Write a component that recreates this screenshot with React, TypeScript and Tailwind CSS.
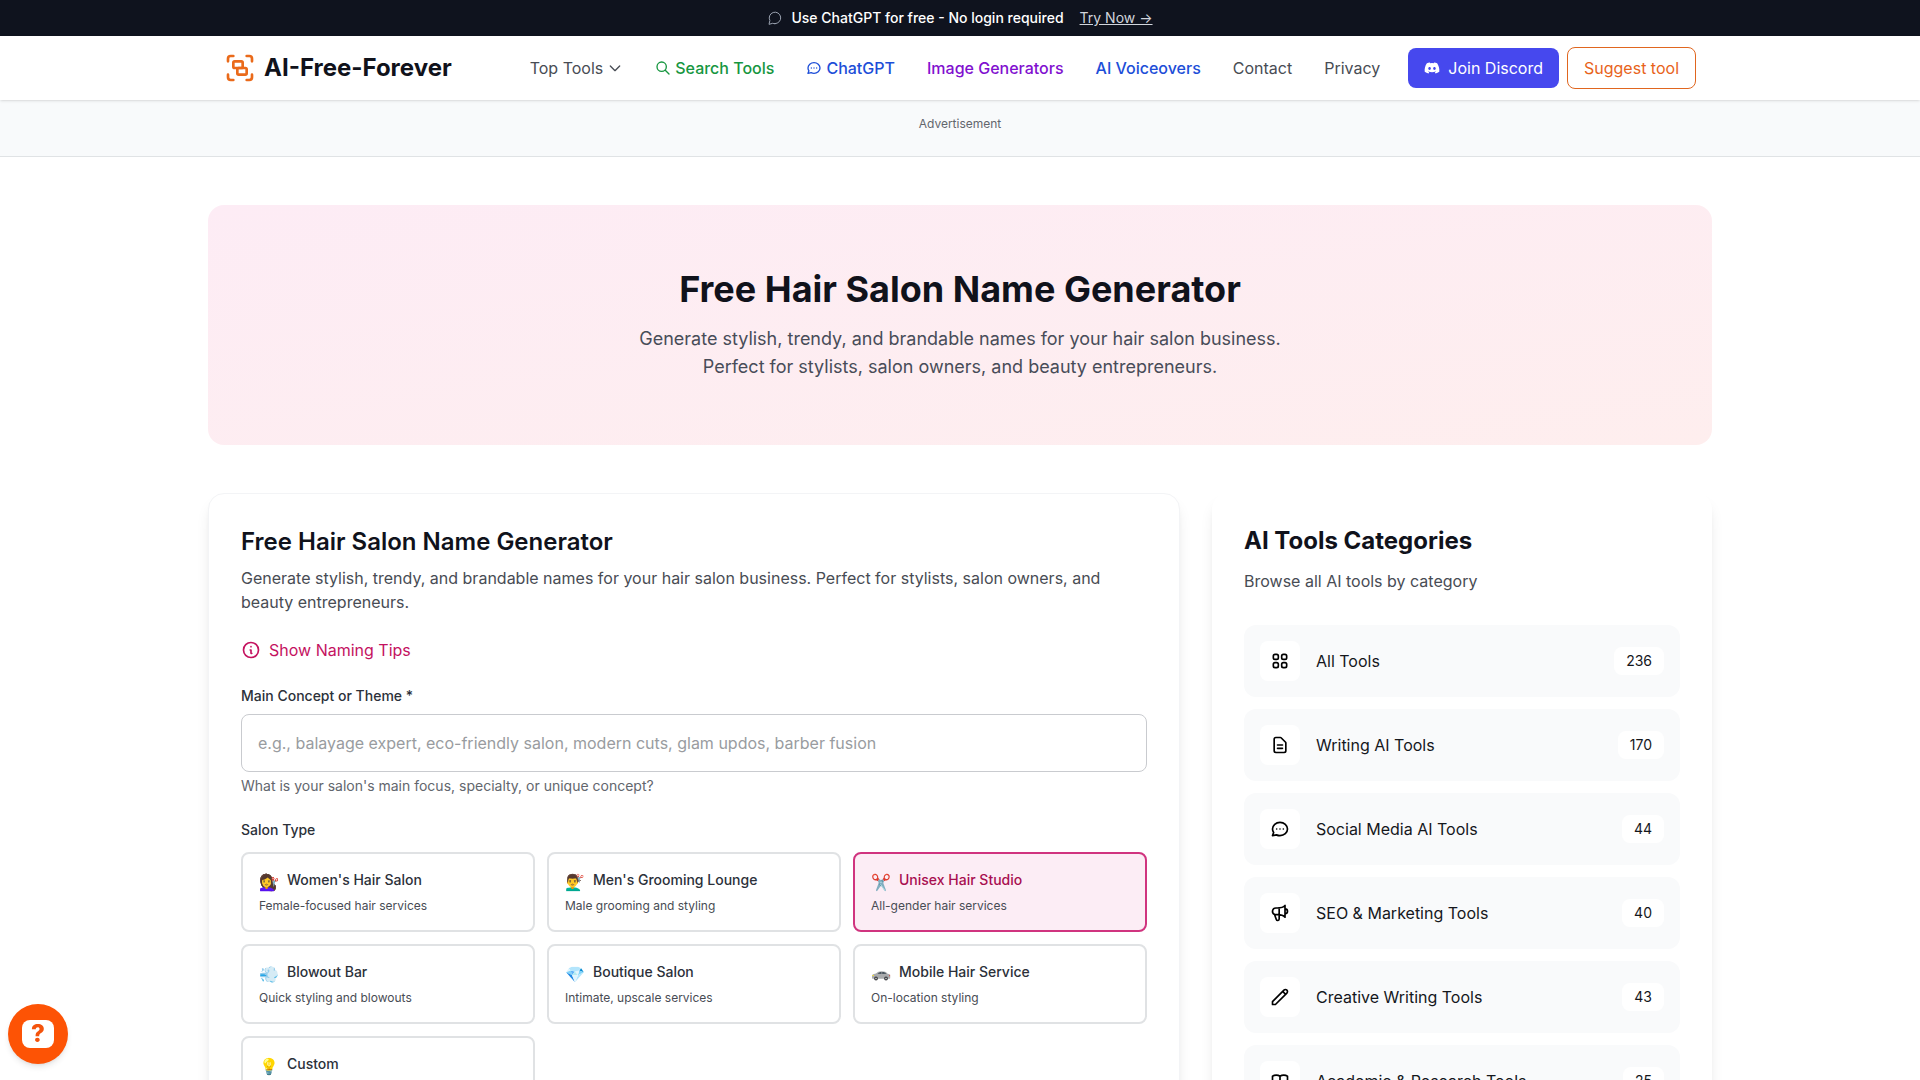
import { useState } from "react";
import {
  HiOutlineBookOpen,
  HiOutlineChat,
  HiOutlineChevronDown,
  HiOutlineDocumentText,
  HiOutlineInformationCircle,
  HiOutlinePencil,
  HiOutlineSearch,
  HiOutlineSpeakerphone,
  HiOutlineViewGrid,
} from "react-icons/hi";
import { FaDiscord } from "react-icons/fa";
import { Group } from "lucide-react";

function classNames(...classes: string[]) {
  return classes.filter(Boolean).join(" ");
}

function ChatBubble({ className }: { className?: string }) {
  return (
    <svg className={className} viewBox="0 0 24 24" fill="none" stroke="currentColor" strokeWidth={1.5} aria-hidden="true">
      <path
        strokeLinecap="round"
        strokeLinejoin="round"
        d="M12 20.5a8.6 8.6 0 1 0-7.7-4.7L3 21.5l5.6-1.6a8.6 8.6 0 0 0 3.4.6z"
      />
    </svg>
  );
}

function SilverCar() {
  return (
    <svg className="h-5 w-5" viewBox="0 0 20 20" aria-hidden="true">
      <path d="M1 14.5c0-1.6.7-2.3 4-2.9 1.6-1.6 3-2.3 5.6-2.3 3 0 4.5.7 6 2.4 1.800.4 2.600 1 2.600 2.600v1.600c0 .6-.4.9-1 .9H2c-.7 0-1-.4-1-1z" fill="#a9abad" />
      <path d="M6.500 11.800c1.200-1.200 2.200-1.700 4-1.700v1.900zM11.200 10.100c2 0 3.200.5 4.300 1.700l-4.300.2z" fill="#46525c" />
      <path d="M1.200 13.200l1.800-.5v1.300H1.200z" fill="#f2dc3a" />
      <path d="M18.200 12.800h.9v1.500h-.9z" fill="#c94a45" />
      <circle cx="5" cy="16.500" r="1.900" fill="#3d3f42" />
      <circle cx="15" cy="16.500" r="1.900" fill="#3d3f42" />
      <circle cx="5" cy="16.500" r=".8" fill="#c9cbcd" />
      <circle cx="15" cy="16.500" r=".8" fill="#c9cbcd" />
    </svg>
  );
}

const salonTypes = [
  { id: "women", icon: "💇‍♀️", name: "Women's Hair Salon", description: "Female-focused hair services" },
  { id: "men", icon: "💇‍♂️", name: "Men's Grooming Lounge", description: "Male grooming and styling" },
  { id: "unisex", icon: "✂️", name: "Unisex Hair Studio", description: "All-gender hair services" },
  { id: "blowout", icon: "💨", name: "Blowout Bar", description: "Quick styling and blowouts" },
  { id: "boutique", icon: "💎", name: "Boutique Salon", description: "Intimate, upscale services" },
  { id: "mobile", icon: <SilverCar />, name: "Mobile Hair Service", description: "On-location styling" },
  { id: "custom", icon: "💡", name: "Custom", description: "Define your own type" },
];

const categories = [
  { name: "All Tools", count: 236, icon: HiOutlineViewGrid },
  { name: "Writing AI Tools", count: 170, icon: HiOutlineDocumentText },
  { name: "Social Media AI Tools", count: 44, icon: HiOutlineChat },
  { name: "SEO & Marketing Tools", count: 40, icon: HiOutlineSpeakerphone },
  { name: "Creative Writing Tools", count: 43, icon: HiOutlinePencil },
  { name: "Academic & Research Tools", count: 25, icon: HiOutlineBookOpen },
];

function Banner() {
  return (
    <div className="flex items-center justify-center bg-[#0f131e] px-4 py-2 text-sm text-white">
      <ChatBubble className="mr-2 h-4 w-4 text-gray-400" />
      <span className="font-medium">Use ChatGPT for free - No login required</span>
      <a href="#chat" className="ml-4 text-gray-300 underline">
        Try Now →
      </a>
    </div>
  );
}

function Header() {
  return (
    <header className="relative bg-white shadow-sm">
      <div className="mx-auto flex h-16 max-w-[1536px] items-center justify-between px-8">
        <a href="#home" className="flex items-center gap-2 text-2xl font-bold text-[#10121b]">
          <Group className="h-8 w-8 text-[#ea6a1a]" aria-hidden="true" />
          AI-Free-Forever
        </a>
        <div className="flex items-center gap-7">
          <nav aria-label="Main" className="flex items-center gap-8 text-[#484c54]">
            <button type="button" className="flex items-center gap-1">
              Top Tools
              <HiOutlineChevronDown className="h-4 w-4" aria-hidden="true" />
            </button>
            <a href="#search" className="flex items-center gap-1 font-medium text-[#16963f]">
              <HiOutlineSearch className="h-4 w-4" aria-hidden="true" />
              Search Tools
            </a>
            <a href="#chatgpt" className="flex items-center gap-1 font-medium text-[#1d4ed8]">
              <HiOutlineChat className="h-4 w-4" aria-hidden="true" />
              ChatGPT
            </a>
            <a href="#images" className="font-medium text-[#8110cf]">Image Generators</a>
            <a href="#voice" className="font-medium text-[#1d4ed8]">AI Voiceovers</a>
            <a href="#contact">Contact</a>
            <a href="#privacy">Privacy</a>
          </nav>
          <div className="flex items-center gap-2">
            <a href="#discord" className="flex items-center gap-2 rounded-lg bg-[#4648ee] px-4 py-2 text-white">
              <FaDiscord className="h-4 w-4" aria-hidden="true" />
              Join Discord
            </a>
            <a href="#suggest" className="rounded-lg border border-[#e0661f] px-4 py-2 text-[#e8631a]">
              Suggest tool
            </a>
          </div>
        </div>
      </div>
    </header>
  );
}

function SalonTypePicker() {
  const [selected, setSelected] = useState("unisex");

  return (
    <div role="group" aria-labelledby="salon-type">
      <h3 id="salon-type" className="mb-3 text-sm font-medium text-[#2c313a]">Salon Type</h3>
      <div className="grid grid-cols-3 gap-3">
        {salonTypes.map((item) => (
          <button
            key={item.id}
            type="button"
            aria-pressed={selected === item.id}
            onClick={() => setSelected(item.id)}
            className={classNames(
              selected === item.id
                ? "border-[#d0347f] bg-[#fcedf5] text-[#a80f50]"
                : "border-[#e0e2e4] bg-white text-[#2c313a]",
              "rounded-lg border-2 p-4 text-left",
            )}
          >
            <span className="flex h-6 items-start gap-2">
              <span className="text-base">{item.icon}</span>
              <span className="text-sm font-medium">{item.name}</span>
            </span>
            <span className="mt-1 block text-xs text-[#484c54]">{item.description}</span>
          </button>
        ))}
      </div>
    </div>
  );
}

function GeneratorCard() {
  const [concept, setConcept] = useState("");

  return (
    <section className="min-w-0 flex-1 rounded-2xl border border-gray-100 bg-white p-8 shadow-lg">
      <h2 className="mb-2 text-2xl font-semibold text-[#10121b]">Free Hair Salon Name Generator</h2>
      <p className="mb-6 text-[#484c54]">
        Generate stylish, trendy, and brandable names for your hair salon business. Perfect for stylists, salon
        owners, and beauty entrepreneurs.
      </p>
      <button type="button" className="mb-6 flex items-center gap-2 text-[#c4125f]">
        <HiOutlineInformationCircle className="h-5 w-5" aria-hidden="true" />
        Show Naming Tips
      </button>
      <label htmlFor="concept" className="mb-2 block text-sm font-medium text-[#2c313a]">
        Main Concept or Theme *
      </label>
      <input
        id="concept"
        value={concept}
        onChange={(e) => setConcept(e.target.value)}
        placeholder="e.g., balayage expert, eco-friendly salon, modern cuts, glam updos, barber fusion"
        className="block w-full rounded-lg border border-[#c9cbcf] p-4 placeholder:text-[#999ca0]"
      />
      <p className="mt-1 mb-6 text-sm text-[#62666d]">What is your salon's main focus, specialty, or unique concept?</p>
      <SalonTypePicker />
    </section>
  );
}

function Sidebar() {
  return (
    <aside className="w-[500px] shrink-0 rounded-2xl bg-white p-8 shadow-lg">
      <h2 className="mb-3 text-2xl font-bold text-[#10121b]">AI Tools Categories</h2>
      <p className="mb-8 text-[#484c54]">Browse all AI tools by category</p>
      <ul className="flex flex-col gap-3">
        {categories.map((item) => (
          <li key={item.name}>
            <a href="#category" className="flex items-center gap-4 rounded-xl bg-[#f9fafb] p-4 text-[#15171c]">
              <span className="flex h-10 w-10 items-center justify-center rounded-lg bg-white">
                <item.icon className="h-5 w-5 text-black" aria-hidden="true" />
              </span>
              <span className="flex-1">{item.name}</span>
              <span className="rounded-lg bg-white px-3 py-1 text-sm">{item.count}</span>
            </a>
          </li>
        ))}
      </ul>
    </aside>
  );
}

export default function App() {
  return (
    <div className="min-h-screen bg-white font-[Inter,sans-serif] text-base">
      <Banner />
      <Header />
      <div className="border-b border-[#e0e3e5] bg-[#f8fafb] pt-4 pb-6 text-center text-xs text-[#62666d]">
        Advertisement
      </div>

      <main className="mx-auto flex max-w-[1536px] flex-col gap-12 px-4 py-12">
        <section className="rounded-2xl bg-linear-to-br from-[#fdecf5] to-[#feeeee] p-16 text-center">
          <h1 className="mb-4 text-4xl font-bold text-[#10121b]">Free Hair Salon Name Generator</h1>
          <p className="mx-auto max-w-2xl text-lg text-[#484c58]">
            Generate stylish, trendy, and brandable names for your hair salon business. Perfect for stylists, salon
            owners, and beauty entrepreneurs.
          </p>
        </section>

        <div className="flex items-start gap-8">
          <GeneratorCard />
          <Sidebar />
        </div>
      </main>

      <button
        type="button"
        aria-label="Help"
        className="fixed bottom-4 left-2 flex h-15 w-15 items-center justify-center rounded-full bg-[#fd5305] shadow-md"
      >
        <span className="flex h-7 w-8 items-center justify-center rounded-lg bg-white text-2xl font-extrabold text-[#f4530c]">
          ?
        </span>
      </button>
    </div>
  );
}
